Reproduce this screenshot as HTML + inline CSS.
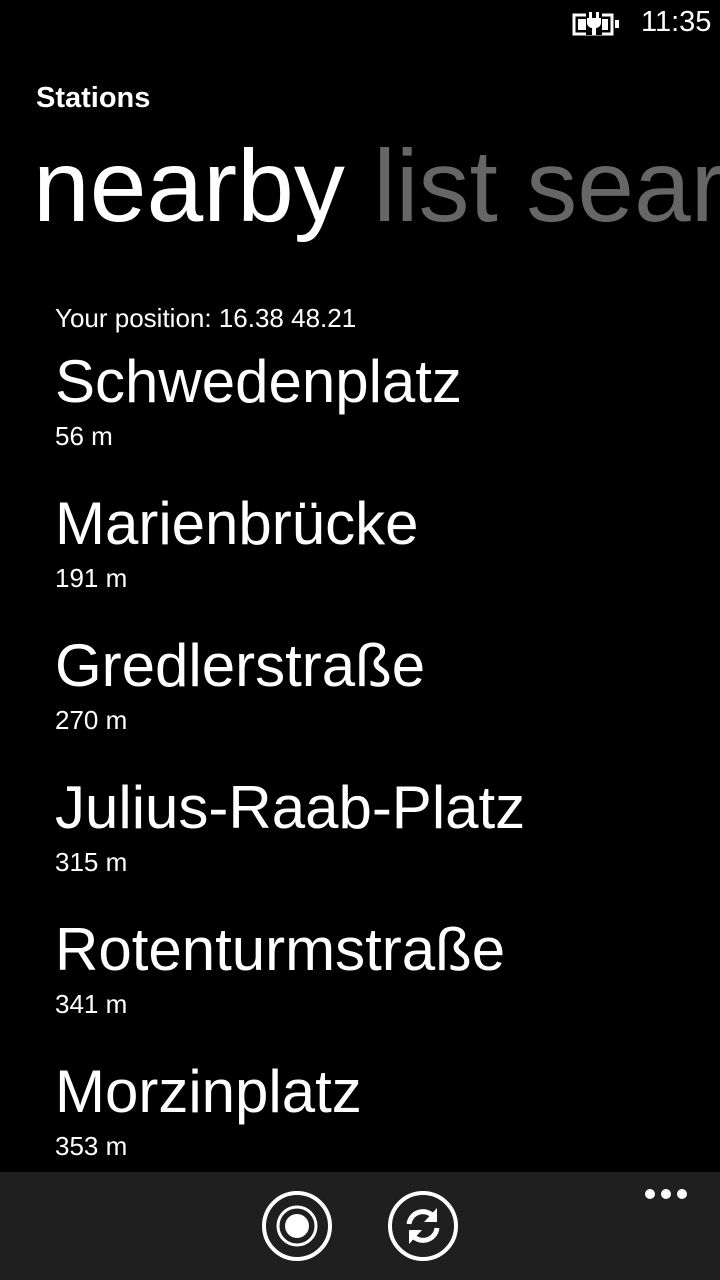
<!DOCTYPE html>
<html><head><meta charset="utf-8"><style>
html,body{margin:0;width:720px;height:1280px;overflow:hidden}
body{background:#000;color:#fff;font-family:"Liberation Sans","DejaVu Sans",sans-serif;position:relative}
.a{position:absolute;white-space:nowrap;line-height:1}
.n{font-size:60px;left:55px}
.d{font-size:26px;left:55px}
</style></head><body>
<svg class="a" style="left:572px;top:10px" width="50" height="28" viewBox="0 0 50 28">
<rect x="2" y="5" width="38" height="19" fill="none" stroke="#fff" stroke-width="3"/>
<rect x="6" y="9" width="30" height="11" fill="#fff"/>
<rect x="43" y="10" width="4" height="8" fill="#fff"/>
<rect x="14" y="3" width="16" height="22" fill="#000"/>
<rect x="17" y="2" width="3" height="6" fill="#fff"/>
<rect x="24" y="2" width="3" height="6" fill="#fff"/>
<path d="M15 8h14v5c0 3-3 5-5 5v7h-4v-7c-2 0-5-2-5-5z" fill="#fff"/>
</svg>
<div class="a" style="left:641px;top:8px;font-size:29px">11:35</div>
<div class="a" style="left:36px;top:84px;font-size:29px;font-weight:bold">Stations</div>
<div class="a" style="left:0;top:130px;width:720px;height:120px;overflow:hidden"><div class="a" style="left:33px;top:5px;font-size:102px">nearby <span style="color:#666">list search</span></div></div>
<div class="a" style="left:55px;top:305px;font-size:26px">Your position: 16.38 48.21</div>
<div class="a n" style="top:352px">Schwedenplatz</div><div class="a d" style="top:423px">56 m</div>
<div class="a n" style="top:494px">Marienbrücke</div><div class="a d" style="top:565px">191 m</div>
<div class="a n" style="top:636px">Gredlerstraße</div><div class="a d" style="top:707px">270 m</div>
<div class="a n" style="top:778px">Julius-Raab-Platz</div><div class="a d" style="top:849px">315 m</div>
<div class="a n" style="top:920px">Rotenturmstraße</div><div class="a d" style="top:991px">341 m</div>
<div class="a n" style="top:1062px">Morzinplatz</div><div class="a d" style="top:1133px">353 m</div>
<div class="a" style="left:0;top:1172px;width:720px;height:108px;background:#1f1f1f"></div>
<svg class="a" style="left:0;top:1172px" width="720" height="108">
<circle cx="297" cy="54" r="33" fill="none" stroke="#fff" stroke-width="4"/>
<circle cx="297" cy="54" r="19" fill="none" stroke="#fff" stroke-width="3"/>
<circle cx="297" cy="54" r="12" fill="#fff"/>
<circle cx="423" cy="54" r="33" fill="none" stroke="#fff" stroke-width="4"/>
<path d="M409 52a14 14 0 0 1 24-8" fill="none" stroke="#fff" stroke-width="5"/>
<path d="M437 36v14h-13z" fill="#fff"/>
<path d="M437 56a14 14 0 0 1-24 8" fill="none" stroke="#fff" stroke-width="5"/>
<path d="M409 72v-14h13z" fill="#fff"/>
<circle cx="650" cy="22" r="5" fill="#fff"/><circle cx="666" cy="22" r="5" fill="#fff"/><circle cx="682" cy="22" r="5" fill="#fff"/>
</svg>
</body></html>
